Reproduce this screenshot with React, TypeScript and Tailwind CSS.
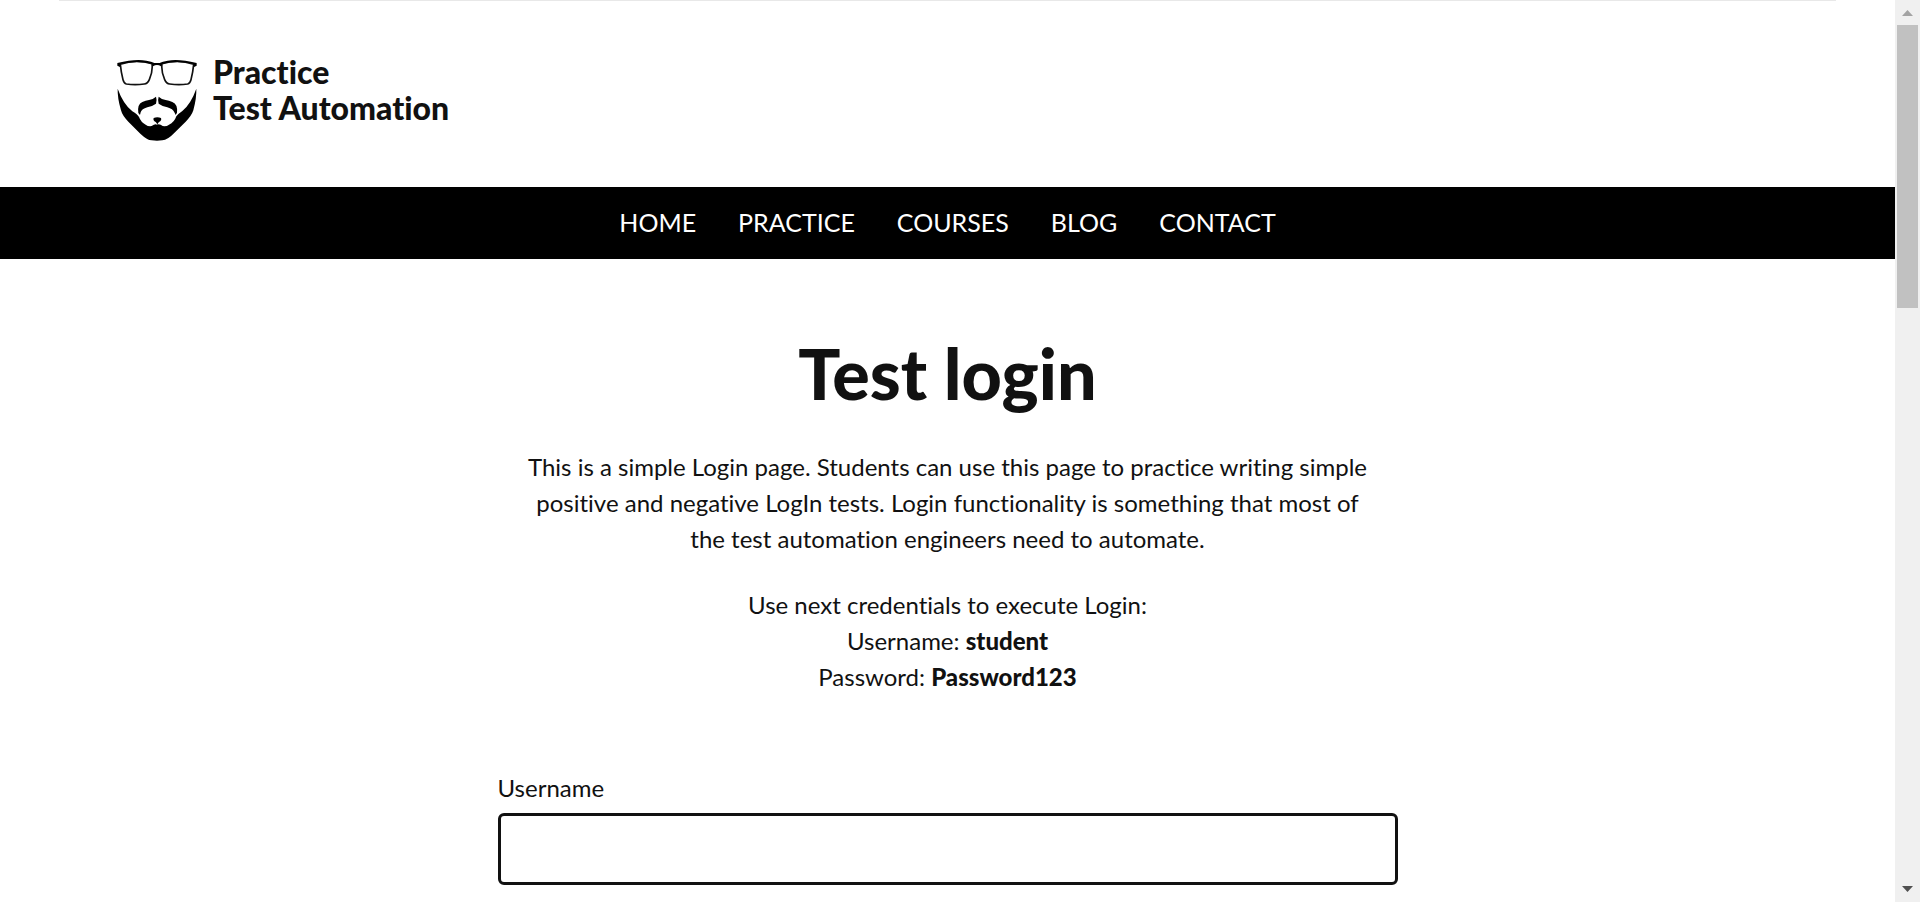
import React from "react";

const links = ["Home", "Practice", "Courses", "Blog", "Contact"];

function BeardLogo() {
  return (
    <svg viewBox="36 42 240 246" className="h-[82px] w-20 shrink-0" aria-hidden="true">
      <g fill="none" stroke="#111" strokeWidth="5" strokeLinejoin="round">
        <path d="M46 58Q92 42 141 56Q144 80 133 104Q128 116 118 117Q90 121 64 117Q57 115 54 104Q48 80 46 58Z" />
        <path d="M266 58Q220 42 171 56Q168 80 179 104Q184 116 194 117Q222 121 248 117Q255 115 258 104Q264 80 266 58Z" />
      </g>
      <path d="M37 54Q90 41 124 47Q140 50 148 54H164Q172 50 188 47Q222 41 275 54V62L267 66L265 57Q220 46 172 56L168 64Q156 56 144 64L140 56Q92 46 47 57L45 66L37 62Z" />
      <path d="M38 131Q54 176 82 199Q98 209 102 216Q108 232 122 239Q130 245 140 243Q150 236 156 239Q164 236 173 243Q184 245 192 239Q208 232 214 214Q220 206 232 198Q258 176 274 131Q275 158 265 196Q260 212 242 230L207 265Q188 285 172 286Q156 288 140 286Q126 285 106 266L70 230Q52 212 48 196Q37 158 38 131Z" />
      <path d="M153 155Q156 162 153 176Q142 184 127 187Q110 192 107 202L105 210L100 204Q96 178 112 171Q122 167 132 165Q146 162 153 155Z" />
      <path d="M161 155Q158 162 161 176Q172 184 187 187Q204 192 208 202L212 210L216 203Q219 178 202 171Q192 167 182 165Q168 162 161 155Z" />
      <path d="M146 219Q157 215 168 219Q171 227 162 231Q158 234 157 240Q156 234 152 231Q143 227 146 219Z" />
    </svg>
  );
}

function ScrollBar() {
  return (
    <div className="flex w-[25px] shrink-0 flex-col items-center bg-[#f0f0f0]" aria-hidden="true">
      <svg viewBox="0 0 25 25" className="h-[25px] w-[25px] shrink-0">
        <path d="M7 16L12.500 10L18 16Z" fill="#a3a3a3" />
      </svg>
      <div className="h-[283px] w-[21px] bg-[#c1c1c1]" />
      <svg viewBox="0 0 25 25" className="mt-auto h-[25px] w-[25px] shrink-0">
        <path d="M7 9L12.500 15L18 9Z" fill="#505050" />
      </svg>
    </div>
  );
}

export default function App() {
  return (
    <div className="flex min-h-screen bg-white font-['Lato',sans-serif] text-2xl leading-9 text-[#111111] [font-variant-ligatures:none]">
      <div className="min-w-0 grow">
        <header>
          <div className="mx-[59px] border-t border-[#e8e8e8] px-[58px] pt-[58px] pb-[46px]">
            <a href="#home" className="flex w-fit gap-4">
              <BeardLogo />
              <span className="-mt-[5px] text-[32px] leading-9 font-black">
                Practice
                <br />
                Test Automation
              </span>
            </a>
          </div>
          <nav className="bg-black pt-[17px] pb-[19px]">
            <ul className="flex flex-wrap justify-center gap-x-[42px] text-[25px] text-white uppercase">
              {links.map((link) => (
                <li key={link}>
                  <a href={`#${link.toLowerCase()}`}>{link}</a>
                </li>
              ))}
            </ul>
          </nav>
        </header>
        <main className="mx-auto max-w-[900px] pt-[72px]">
          <section className="px-5 text-center">
            <h1 className="text-[70px] leading-[84px] font-black">Test login</h1>
            <p className="mt-[34px]">
              This is a simple Login page. Students can use this page to practice writing simple
              positive and negative LogIn tests. Login functionality is something that most of the
              test automation engineers need to automate.
            </p>
            <p className="mt-[30px]">
              Use next credentials to execute Login:
              <br />
              Username: <b className="font-black">student</b>
              <br />
              Password: <b className="font-black">Password123</b>
            </p>
          </section>
          <form className="mt-[75px]">
            <label htmlFor="username" className="block">
              Username
            </label>
            <input
              id="username"
              type="text"
              className="mt-[7px] block h-[72px] w-full rounded-md border-3 border-[#111111] bg-white px-4 outline-none"
            />
          </form>
        </main>
      </div>
      <ScrollBar />
    </div>
  );
}
